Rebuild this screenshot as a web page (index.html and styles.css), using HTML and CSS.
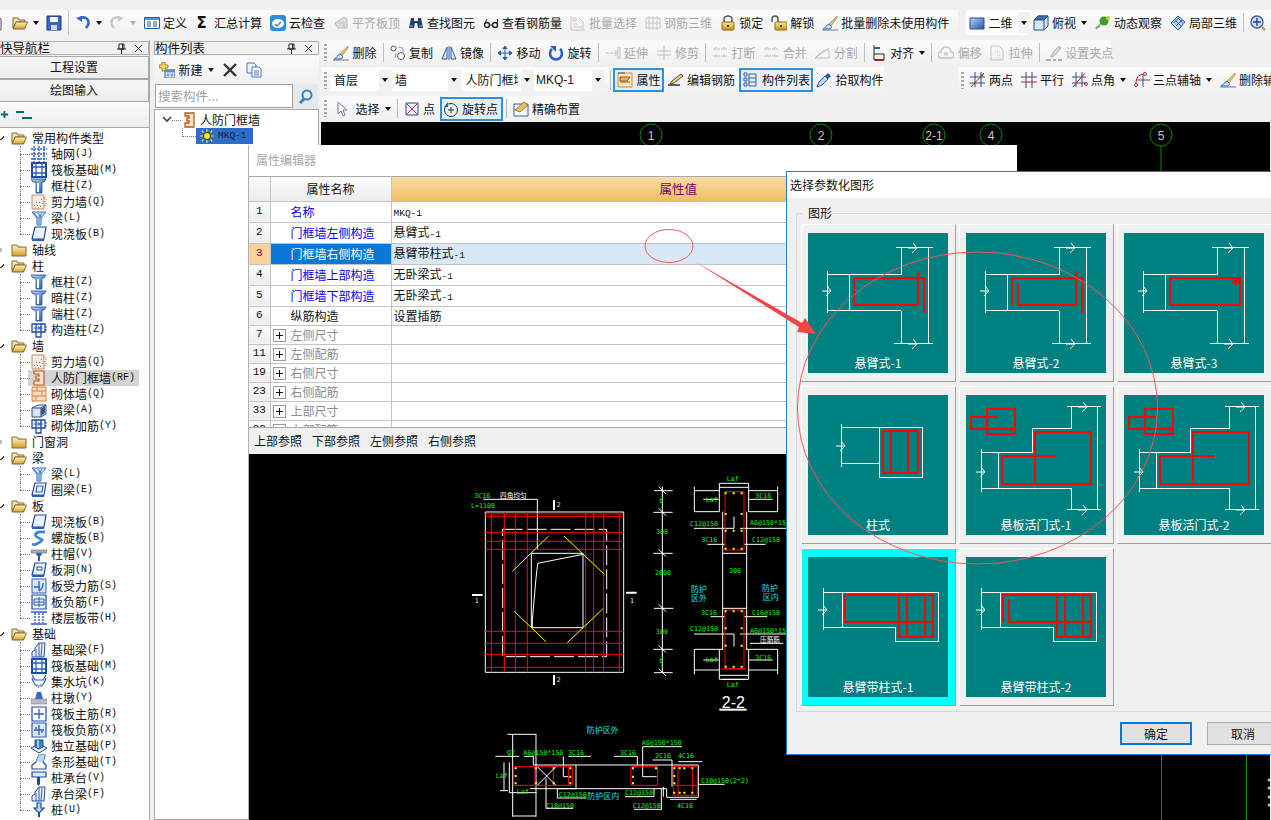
FILE: index.html
```html
<!DOCTYPE html>
<html lang="zh-CN">
<head>
<meta charset="utf-8">
<title>构件属性编辑</title>
<link rel="stylesheet" href="styles.css">
</head>
<body>
<svg class="defs" xmlns="http://www.w3.org/2000/svg">
<defs>
<linearGradient id="gf" x1="0" y1="0" x2="0" y2="1"><stop offset="0" stop-color="#fff6c4"/><stop offset="1" stop-color="#d69e26"/></linearGradient>
<linearGradient id="gb" x1="0" y1="0" x2="1" y2="1"><stop offset="0" stop-color="#bcd6f4"/><stop offset="1" stop-color="#1c52ae"/></linearGradient>
<linearGradient id="gy" x1="0" y1="0" x2="0" y2="1"><stop offset="0" stop-color="#ffe98a"/><stop offset="1" stop-color="#c9921a"/></linearGradient>
<symbol id="doc" viewBox="0 0 16 16"><path d="M3 1h7l3 3v11H3z" fill="#fff" stroke="#555"/></symbol>
<symbol id="fopen" viewBox="0 0 16 16"><path d="M1 3h5l1 2h6v2H4l-3 6z" fill="#f0e3b4" stroke="#85692c"/><path d="M4 7h11.500l-3 7H1z" fill="url(#gf)" stroke="#85692c"/></symbol>
<symbol id="fclosed" viewBox="0 0 16 16"><path d="M1 3h5l1 2h8v9H1z" fill="url(#gf)" stroke="#85692c"/></symbol>
<symbol id="save" viewBox="0 0 16 16"><path d="M1 1h14v14H1z" fill="#3d66c4" stroke="#1b357f"/><path d="M4 2h8v5H4z" fill="#fff"/><path d="M5 10h6v5H5z" fill="#c9d5ec"/></symbol>
<symbol id="undo" viewBox="0 0 16 16"><path d="M5 3C11 1 15 5 13 10l-2 3" fill="none" stroke="#2f68c8" stroke-width="2.600"/><path d="M1 3l6-2v6z" fill="#2f68c8"/></symbol>
<symbol id="redo" viewBox="0 0 16 16"><path d="M11 3C5 1 1 5 3 10l2 3" fill="none" stroke="#c8c8c8" stroke-width="2.600"/><path d="M15 3L9 1v6z" fill="#c8c8c8"/></symbol>
<symbol id="define" viewBox="0 0 16 16"><path d="M.5 2.500h15v11H.5z" fill="#fff" stroke="#2a5ea8"/><path d="M1 3h14v2H1z" fill="#5c8fd0"/><path d="M3 7h4M3 9h4M3 11h4M9 7h4M9 9h4M9 11h4" stroke="#33558a"/></symbol>
<symbol id="cloud" viewBox="0 0 16 16"><rect width="16" height="16" rx="3" fill="#2a8fdc"/><ellipse cx="8" cy="8.500" rx="6" ry="4.500" fill="#fff"/><path d="M5 9l2 2 4-4" fill="none" stroke="#2a8fdc" stroke-width="1.500"/></symbol>
<symbol id="flat" viewBox="0 0 16 16"><path d="M2 8l9-6 3 2v9H5z" fill="#ddd" stroke="#bbb"/><path d="M5 8h6v5" fill="none" stroke="#bbb"/></symbol>
<symbol id="binoc" viewBox="0 0 16 16"><path d="M3 3h3v3h4V3h3l2 10h-5L9 8H7l-1 5H1z" fill="#26406e"/><path d="M2 11h3M11 11h3" stroke="#9dc0ea"/></symbol>
<symbol id="glass" viewBox="0 0 16 16"><circle cx="4" cy="10" r="2.500" fill="none" stroke="#222" stroke-width="1.400"/><circle cx="12" cy="10" r="2.500" fill="none" stroke="#222" stroke-width="1.400"/><path d="M4 4L1.500 9M14.500 4v5M6 10h3" fill="none" stroke="#222"/></symbol>
<symbol id="bsel" viewBox="0 0 16 16"><path d="M1 1v14h14M3 3h3v3H3zM3 9h5M3 12h9M9 3l4 4v7" fill="none" stroke="#c4c4c4"/></symbol>
<symbol id="r3d" viewBox="0 0 16 16"><path d="M1 3h14v10H1zM4 1v14M8 1v14M12 1v14M1 8h14" fill="none" stroke="#c8c8c8"/></symbol>
<symbol id="lock" viewBox="0 0 16 16"><path d="M4 7V4a4 3 0 0 1 8 0v3" fill="none" stroke="#555" stroke-width="1.500"/><rect x="2" y="7" width="12" height="8" rx="1" fill="url(#gy)" stroke="#8a6a1c"/><path d="M8 10v2" stroke="#5a4410" stroke-width="2"/></symbol>
<symbol id="unlock" viewBox="0 0 16 16"><path d="M1 7V4a3 3 0 0 1 6 0v3" fill="none" stroke="#555" stroke-width="1.500"/><rect x="4" y="7" width="12" height="8" rx="1" fill="url(#gy)" stroke="#8a6a1c"/><path d="M10 10v2" stroke="#5a4410" stroke-width="2"/></symbol>
<symbol id="brush" viewBox="0 0 16 16"><path d="M15 1L7 9l2 2 6-8z" fill="#e9c06c" stroke="#a77a26" stroke-width=".600"/><path d="M7 9c-3 1-3 4-6 5h6c3-1 3-2 2-3z" fill="#cfe0f6" stroke="#2f68c8"/><path d="M0 15h16" stroke="#777"/></symbol>
<symbol id="v2d" viewBox="0 0 16 16"><path d="M1 3h14v11H1z" fill="url(#gb)" stroke="#2a4fa0"/></symbol>
<symbol id="cube" viewBox="0 0 16 16"><path d="M1 5l4-4h10v10l-4 4H1z" fill="#d8e8f8" stroke="#264a80"/><path d="M1 5l4-4h10l-4 4z" fill="#3a6fa8" stroke="#264a80"/><path d="M11 5v10M11 5l4-4" stroke="#264a80"/></symbol>
<symbol id="orbit" viewBox="0 0 16 16"><path d="M1 14C3 11 10 4 15 3" fill="none" stroke="#b2b2b2" stroke-width="2"/><circle cx="9" cy="6" r="4.500" fill="#3e9e28"/><circle cx="13" cy="3" r="2" fill="#d8c820"/><path d="M1 13l4-2" stroke="#889" stroke-width="1.500"/></symbol>
<symbol id="local" viewBox="0 0 16 16"><path d="M8 1l7 6-7 8-7-7z" fill="#bcd6f4" stroke="#2a5ea8"/><path d="M4.500 4.500l7 7M8 3l5 5M6 11L12 5M3.500 8l6-6" stroke="#2a5ea8"/></symbol>
<symbol id="zoomi" viewBox="0 0 16 16"><circle cx="7" cy="7" r="6" fill="#cfe0f6" stroke="#3a5a92" stroke-width="1.300"/><path d="M7 3v8M3 7h8" stroke="#1c3f8c" stroke-width="1.400"/><path d="M12 12l3 3" stroke="#c28a2a" stroke-width="2"/></symbol>
<symbol id="copyc" viewBox="0 0 16 16"><circle cx="3.500" cy="3.500" r="2.500" fill="#fff" stroke="#556"/><circle cx="11" cy="11" r="3.500" fill="#fff" stroke="#556"/><path d="M8 2l5 1v4M6 8l-1 5" fill="none" stroke="#8aa4c8"/></symbol>
<symbol id="mirror" viewBox="0 0 16 16"><path d="M6 2v12H1zM10 2v12h5z" fill="#dfeaf8" stroke="#2a5ea8"/><path d="M8 1v14" stroke="#2a5ea8"/></symbol>
<symbol id="move" viewBox="0 0 16 16"><path d="M8 1v14M1 8h14M8 1L6 3.500h4zM8 15l-2-2.500h4zM1 8l2.500-2v4zM15 8l-2.500-2v4z" fill="#2a5ea8" stroke="#2a5ea8"/></symbol>
<symbol id="rotate" viewBox="0 0 16 16"><path d="M4 4a6 6 0 1 0 8 0" fill="none" stroke="#2a5ec8" stroke-width="2.600"/><path d="M2 1h6v6z" fill="#2a5ec8"/></symbol>
<symbol id="extend" viewBox="0 0 16 16"><path d="M0 8h4M5 8h3M9 8h2M13 2v12M15 2v12M11 5v6" stroke="#c0c0c0" fill="none"/></symbol>
<symbol id="trim" viewBox="0 0 16 16"><path d="M1 6h14M1 10h14M8 1v14" stroke="#c0c0c0" fill="none"/></symbol>
<symbol id="break" viewBox="0 0 16 16"><path d="M1 4h14M1 11h14M4 2v4M12 2v4M4 9v4M12 9v4" stroke="#c0c0c0" fill="none" stroke-dasharray="3 1"/></symbol>
<symbol id="split" viewBox="0 0 16 16"><path d="M1 13L10 5h5v8zM1 13l14-10" stroke="#c0c0c0" fill="none"/></symbol>
<symbol id="align" viewBox="0 0 16 16"><path d="M3 0v15h10v-6H3" fill="none" stroke="#222"/><path d="M3 3h6" stroke="#2a5ea8" stroke-width="2"/><path d="M4 15h9" stroke="#a02020" stroke-width="2"/></symbol>
<symbol id="offset" viewBox="0 0 16 16"><path d="M3 13a3 3 0 0 1 0-6 5 5 0 0 1 10 0 3 3 0 0 1 0 6z" fill="none" stroke="#c4c4c4" stroke-width="1.500"/><circle cx="8" cy="9" r="2" fill="#ccc"/></symbol>
<symbol id="stretch" viewBox="0 0 16 16"><path d="M2 1h8l4 4v10H2z" fill="none" stroke="#c4c4c4"/><path d="M6 7h5M8 10h3M9 13h3" stroke="#c4c4c4" stroke-dasharray="1 1"/></symbol>
<symbol id="grip" viewBox="0 0 16 16"><path d="M0 15h5M7 15h3M12 15h4" stroke="#b0b0b0" stroke-width="2"/><path d="M13 1l2 2-7 8-3 1 1-3z" fill="#d8d8d8" stroke="#b0b0b0"/></symbol>
<symbol id="props" viewBox="0 0 16 16"><path d="M1 1h14v14H1z" fill="#f8e8c8" stroke="#d8892a"/><path d="M3 5h10l-3 4H3zM3 10h10" fill="#e8b468" stroke="#8a5a1e"/><path d="M1 1h7" stroke="#2a5ea8"/></symbol>
<symbol id="erebar" viewBox="0 0 16 16"><path d="M0 13h12" stroke="#222" stroke-width="1.400"/><path d="M2 12l2-3 9-7 2 2-9 7z" fill="#f2d47a" stroke="#222" stroke-width=".800"/></symbol>
<symbol id="listi" viewBox="0 0 16 16"><path d="M1 1h3v3H1zM1 6h3v3H1zM1 11h3v3H1zM6 2h7v12H6zM6 6h7M6 10h7" fill="none" stroke="#2a5ea8"/></symbol>
<symbol id="picker" viewBox="0 0 16 16"><path d="M1 15l2-5 6-6 3 3-6 6z" fill="#bcd6f4" stroke="#2a5ea8"/><path d="M9 4l3-3 3 3-3 3z" fill="#2a5ea8"/></symbol>
<symbol id="twop" viewBox="0 0 16 16"><path d="M0 5h15M0 11h15M5 0v15M11 0v15" stroke="#3a4a8a" fill="none"/><path d="M1 15L14 1" stroke="#c02020"/><circle cx="12" cy="3" r="1.500" fill="#3a8a2a"/></symbol>
<symbol id="parallel" viewBox="0 0 16 16"><path d="M0 5h16M5 0v16M11 0v16" stroke="#3a4a8a" fill="none"/><path d="M0 10h16" stroke="#c02020"/></symbol>
<symbol id="pangle" viewBox="0 0 16 16"><path d="M0 5h14M0 11h14M4 0v15M10 0v15" stroke="#3a4a8a" fill="none"/><path d="M1 15L13 1" stroke="#c02020"/><circle cx="14" cy="12" r="1.500" fill="none" stroke="#c02020"/></symbol>
<symbol id="threep" viewBox="0 0 16 16"><path d="M2 15V10a8 8 0 0 1 8-8" fill="none" stroke="#c02020"/><path d="M3 8h13M9 3v12" stroke="#3a4a8a"/><circle cx="11" cy="2" r="1.500" fill="#fff" stroke="#c02020"/><circle cx="2" cy="13" r="1.500" fill="#fff" stroke="#c02020"/></symbol>
<symbol id="cursor" viewBox="0 0 16 16"><path d="M5 1v12l3-3 2 5 2-1-2-5h4z" fill="#fff" stroke="#6a7a9a"/></symbol>
<symbol id="pointi" viewBox="0 0 16 16"><path d="M2 2h12v12H2z" fill="#e8eef8" stroke="#2a4a8a"/><path d="M3 3l10 10M13 3L3 13" stroke="#c02040"/></symbol>
<symbol id="rotp" viewBox="0 0 16 16"><circle cx="8" cy="9" r="6.500" fill="none" stroke="#333"/><path d="M8 6v6M5 9h6" stroke="#333"/><path d="M1 6l4-5v5z" fill="#2a5ea8"/></symbol>
<symbol id="precise" viewBox="0 0 16 16"><path d="M1 3h14v12H1z" fill="#fff" stroke="#2a5ea8"/><path d="M2 9L11 1l4 3-8 7z" fill="#e6c46a" stroke="#9a7a2a"/></symbol>
<symbol id="tplus" viewBox="0 0 10 10"><path d="M1 5h8M5 1v8" stroke="#0a6a6a" stroke-width="2"/></symbol>
<symbol id="tminus" viewBox="0 0 16 10"><path d="M0 2h8M6 8h10" stroke="#0a6a6a" stroke-width="2"/></symbol>
<symbol id="newi" viewBox="0 0 16 16"><path d="M3 0h3v3h3v3H6v3H3V6H0V3h3z" fill="#f2d860" stroke="#a08a20"/><path d="M6 8h10v8H6z" fill="#fff" stroke="#2a5ea8"/><path d="M6 8h10v2H6zM9 11v4M13 11v4M6 13h10" fill="#5c8fd0" stroke="#5c8fd0"/></symbol>
<symbol id="cross" viewBox="0 0 16 16"><path d="M2 2l12 12M14 2L2 14" stroke="#333" stroke-width="2.400"/></symbol>
<symbol id="pcopy" viewBox="0 0 16 16"><path d="M1 1h7l2 2v8H1z" fill="#e8f0fa" stroke="#4a7ac0"/><path d="M6 5h7l2 2v8H6z" fill="#fff" stroke="#4a7ac0"/><path d="M8 9h5M8 11h5M8 13h5" stroke="#4a7ac0"/></symbol>
<symbol id="searchi" viewBox="0 0 16 16"><circle cx="9" cy="6" r="4.500" fill="#e6f2fc" stroke="#2a86d0" stroke-width="2"/><path d="M6 10l-4 4" stroke="#2a86d0" stroke-width="3"/></symbol>
<symbol id="pin" viewBox="0 0 9 11"><path d="M2 1h5v5H2zM0 6h9M4.500 6v5M5.500 1v5" fill="none" stroke="#222"/></symbol>
<symbol id="closex" viewBox="0 0 9 9"><path d="M1 1l7 7M8 1L1 8" stroke="#333"/></symbol>
<symbol id="axisg" viewBox="0 0 16 16"><path d="M3 0v16M8 0v16M13 0v16M0 3h16M0 8h16M0 13h16" stroke="#2a5cc0" stroke-width="1.400" stroke-dasharray="2 1"/></symbol>
<symbol id="raft" viewBox="0 0 16 16"><path d="M1 1h14v14H1z" fill="#fff" stroke="#1c4aa0" stroke-width="2"/><path d="M5 1v14M11 1v14M1 5h14M1 11h14" stroke="#2a5cc0" stroke-width="1.300"/></symbol>
<symbol id="col" viewBox="0 0 16 16"><path d="M0 1h15l-2 3h-2v11H5V4H2z" fill="url(#gb)" stroke="#1c4aa0" stroke-width=".800"/><path d="M7 5v9" stroke="#fff" stroke-width="2"/></symbol>
<symbol id="shear" viewBox="0 0 16 16"><path d="M1 1h12v14H1z" fill="#f3ece4" stroke="#c88a5a"/><path d="M3 12l1-1M6 12l1-1M9 13l1-1M5 9l1-1M8 9l1-1M10 6l1-1M11 10l1-1M4 14h1M7 14h1" stroke="#8a7a6a"/><path d="M14 3v1M14 7v1M14 11v1M15 5v1M15 9v1" stroke="#d8692a"/></symbol>
<symbol id="beam" viewBox="0 0 16 16"><path d="M1 2h14l-5 6v7H6V8z" fill="#e4effb" stroke="#2a6ac0"/><path d="M3 3l4 5M7 3l3 5M11 3l-3 5M8 8v6" stroke="#2a6ac0"/></symbol>
<symbol id="slab" viewBox="0 0 16 16"><path d="M4 1h11l-2 12H1z" fill="#eaf2fb" stroke="#1c4aa0" stroke-width="1.200"/><path d="M1 13h12v2H1z" fill="#2a5cc0"/></symbol>
<symbol id="door" viewBox="0 0 16 16"><path d="M3 1h10v14H3v-4h5V9H5V6h3V4H3z" fill="#f5e4d4" stroke="#b85a1c" stroke-width="1.200"/></symbol>
<symbol id="brick" viewBox="0 0 16 16"><path d="M1 1h14v14H1z" fill="#f8dcc4" stroke="#d8803a"/><path d="M1 5h14M1 10h14M6 1v4M11 5v5M5 10v5" stroke="#d8803a"/></symbol>
<symbol id="darkb" viewBox="0 0 16 16"><path d="M1 6l6-3h8v9l-5 3H1z" fill="#d8e4f2" stroke="#33558a"/><path d="M1 6h9v9M10 6l5-3" fill="none" stroke="#33558a"/><path d="M10 7l4-3v7l-4 3z" fill="#33558a"/></symbol>
<symbol id="mreb" viewBox="0 0 16 16"><path d="M1 2h13v8H1zM5 2v13h5V2" fill="none" stroke="#1c4aa0" stroke-width="1.300"/><path d="M3 6h9M7 4l3 4M10 4l-3 4" stroke="#2a5cc0"/><path d="M14 5h2M14 8h2" stroke="#2a5cc0"/></symbol>
<symbol id="ring" viewBox="0 0 16 16"><path d="M4 1h11l-2 12H1z" fill="#fff" stroke="#1c4aa0" stroke-width="1.200"/><path d="M6 4h6l-1 6H5z" fill="#eaf2fb" stroke="#2a5cc0" stroke-width="1.200"/><path d="M1 13h12v2H1z" fill="#2a5cc0"/></symbol>
<symbol id="spiral" viewBox="0 0 16 16"><path d="M14 2C6 1 2 4 6 7s8 2 3 5-5 3-8 2" fill="none" stroke="#3a86d8" stroke-width="2.800"/></symbol>
<symbol id="cap" viewBox="0 0 16 16"><path d="M0 4h16v3H0z" fill="#a8aeb8" stroke="#666" stroke-width=".600"/><path d="M5 7h6l-1 3H6zM7 10h2v5H7z" fill="#2a5cc0"/></symbol>
<symbol id="hole" viewBox="0 0 16 16"><path d="M4 1h11l-2 12H1z" fill="#eaf2fb" stroke="#1c4aa0" stroke-width="1.200"/><path d="M6 5h5v3H6z" fill="#fff" stroke="#1c4aa0"/><path d="M1 13h12v2H1z" fill="#2a5cc0"/></symbol>
<symbol id="sreb" viewBox="0 0 16 16"><path d="M1 1h14v14H1z" fill="#d8e6f6" stroke="#2a5cc0"/><path d="M8 3v10M3 9h6M12 5c0 4-2 7-4 8" fill="none" stroke="#2a5cc0" stroke-width="1.300"/></symbol>
<symbol id="sneg" viewBox="0 0 16 16"><path d="M1 1h14v14H1z" fill="#eaf2fb" stroke="#1c4aa0" stroke-width="1.200"/><path d="M3 5h10v6H3zM8 3v10M3 8h10" fill="none" stroke="#2a5cc0"/></symbol>
<symbol id="band" viewBox="0 0 16 16"><path d="M0 2h16M0 14h16" stroke="#2a5cc0" stroke-width="1.400"/><path d="M4 3v10M12 3v10M8 3v10" stroke="#2a5cc0" stroke-dasharray="2 1" stroke-width="1.400"/></symbol>
<symbol id="fbeam" viewBox="0 0 16 16"><path d="M4 6l4-5h6l-1 14H1v-5l3-2z" fill="#eaf2fb" stroke="#1c4aa0"/><path d="M8 1v14M11 2l-1 13M5 7v8" stroke="#2a5cc0"/></symbol>
<symbol id="sump" viewBox="0 0 16 16"><path d="M1 1l3 5h8l3-5M1 4c2 6 3 8 7 8s5-2 7-8" fill="none" stroke="#2a5cc0" stroke-width="1.200"/><path d="M4 12l1-1M7 14l1-1M10 13l1-1M6 11h1M9 10h1" stroke="#5a90d8"/></symbol>
<symbol id="pier" viewBox="0 0 16 16"><path d="M6 2h4l2 7H4z" fill="#3a6ac0"/><path d="M0 9h16v5H0z" fill="#b8bcc4" stroke="#777" stroke-width=".600"/></symbol>
<symbol id="rmain" viewBox="0 0 16 16"><path d="M1 1h14v14H1z" fill="#fff" stroke="#1c4aa0" stroke-width="1.200"/><path d="M8 3v10M3 8h10" stroke="#2a5cc0" stroke-width="1.300"/></symbol>
<symbol id="rneg" viewBox="0 0 16 16"><path d="M1 1h14v14H1z" fill="#dce8f6" stroke="#2a5cc0" stroke-width="1.200"/><path d="M8 3v10M3 8h10M5 5v2M11 9v2" stroke="#2a5cc0" stroke-width="1.300"/></symbol>
<symbol id="iso" viewBox="0 0 16 16"><path d="M0 10l8-4 8 4-8 5z" fill="#eaf2fb" stroke="#1c4aa0"/><path d="M4 2h8v7l-4 2-4-2z" fill="#4a80c8" stroke="#1c4aa0"/><path d="M7 2v8" stroke="#fff"/></symbol>
<symbol id="strip" viewBox="0 0 16 16"><path d="M1 15v-4l4-3 3-7h6l-2 7 3 3v4z" fill="#fff" stroke="#1c4aa0" stroke-width="1.200"/><path d="M8 1l6 0-2 7H5z" fill="#bcd6f4"/></symbol>
<symbol id="pcap" viewBox="0 0 16 16"><path d="M1 2h14v5H1z" fill="#dce8f6" stroke="#1c4aa0" stroke-width="1.200"/><path d="M6 7h3v7l-1.500 2L6 14z" fill="#1c4aa0"/></symbol>
<symbol id="pile" viewBox="0 0 16 16"><path d="M6 1h4v5h3l-5 5-5-5h3z" fill="#bcd6f4" stroke="#1c4aa0" stroke-width="1.200"/><path d="M8 11v4" stroke="#1c4aa0" stroke-width="2"/></symbol>
<symbol id="doorl" viewBox="0 0 16 16"><path d="M4 1h9v14H4v-4h4V9H6V6h2V4H4z" fill="#f8e4d0" stroke="#b85a1c" stroke-width="1.300"/></symbol>
<symbol id="sun" viewBox="0 0 16 16"><circle cx="8" cy="8" r="4" fill="#f6e818" stroke="#3a3a00"/><path d="M8 0v3M8 13v3M0 8h3M13 8h3M2 2l2 2M12 12l2 2M14 2l-2 2M2 14l2-2" stroke="#f6e818" stroke-width="1.400"/></symbol>
<g id="brk"><path d="M-5 1H4L-1 6M4 1L0-4" fill="none" stroke="#fff"/></g>
<symbol id="tbase" viewBox="0 0 140 120" overflow="visible"><path class="wl" d="M19.500 38v42M19 41.500h74M93.500 41.500V14.500M88 14.500h37M120.500 14v96.500M86 110.500h39M93.500 110.500V77.500M19 77.500h74M41.500 41v36"/><use href="#brk" x="19" y="57"/><use href="#brk" x="105" y="14"/><use href="#brk" x="105" y="110"/></symbol>
<symbol id="tdoor" viewBox="0 0 140 120" overflow="visible"><path class="wl" d="M15.500 54v43M15 57.500h51.500V33.500H105.500V11.500M101 11.500h34M131.500 11v103M101 114.500h34M105.500 114V93.500H15M32.500 57v36"/><use href="#brk" x="15" y="76"/><use href="#brk" x="117" y="11"/><use href="#brk" x="117" y="114"/></symbol>
<symbol id="tband" viewBox="0 0 140 120" overflow="visible"><path class="wl" d="M15.500 31v42M15 35.500h115.500V84.500H87.500V70.500H15M34.500 35v35"/><use href="#brk" x="15" y="52"/></symbol>
</defs>
</svg>

<div class="app">
<header class="toprow">
  <div class="tb tb-top">
    <span class="it lead"><svg class="ic"><use href="#doc"/></svg></span>
    <span class="it"><svg class="ic"><use href="#fopen"/></svg></span><i class="caret"></i>
    <span class="it"><svg class="ic"><use href="#save"/></svg></span><i class="sp tall"></i>
    <span class="it"><svg class="ic"><use href="#undo"/></svg></span><i class="caret"></i>
    <span class="it"><svg class="ic"><use href="#redo"/></svg></span><i class="caret off"></i>
    <span class="it"><svg class="ic"><use href="#define"/></svg>定义</span>
    <span class="it"><span class="sigma">Σ</span>汇总计算</span>
    <span class="it"><svg class="ic"><use href="#cloud"/></svg>云检查</span>
    <span class="it off"><svg class="ic"><use href="#flat"/></svg>平齐板顶</span>
    <span class="it"><svg class="ic"><use href="#binoc"/></svg>查找图元</span>
    <span class="it"><svg class="ic"><use href="#glass"/></svg>查看钢筋量</span>
    <span class="it off"><svg class="ic"><use href="#bsel"/></svg>批量选择</span>
    <span class="it off"><svg class="ic"><use href="#r3d"/></svg>钢筋三维</span>
    <span class="it"><svg class="ic"><use href="#lock"/></svg>锁定</span>
    <span class="it"><svg class="ic"><use href="#unlock"/></svg>解锁</span>
    <span class="it"><svg class="ic"><use href="#brush"/></svg>批量删除未使用构件</span>
  </div>
  <div class="tb tb-view">
    <span class="viewbox"><span class="it"><svg class="ic"><use href="#v2d"/></svg>二维</span><span class="dd"><i class="caret"></i></span></span>
    <span class="it"><svg class="ic"><use href="#cube"/></svg>俯视</span><i class="caret"></i>
    <span class="it"><svg class="ic"><use href="#orbit"/></svg>动态观察</span>
    <span class="it"><svg class="ic"><use href="#local"/></svg>局部三维</span><i class="sp"></i>
    <span class="it"><svg class="ic"><use href="#zoomi"/></svg></span>
  </div>
</header>

<div class="work">
  <aside class="nav">
    <div class="dock"><span>快导航栏</span><svg class="pin"><use href="#pin"/></svg><svg class="xx"><use href="#closex"/></svg></div>
    <div class="navbtn first">工程设置</div>
    <div class="navbtn">绘图输入</div>
    <div class="navtools"><svg class="tp"><use href="#tplus"/></svg><svg class="tm"><use href="#tminus"/></svg></div>
    <div class="navtree">
      <div class="grp"><i class="tw open"></i><svg class="ic"><use href="#fopen"/></svg>常用构件类型</div>
      <ul class="leaves">
        <li><span class="cell"><svg class="ic"><use href="#axisg"/></svg>轴网<span class="key">(J)</span></span></li>
        <li><span class="cell"><svg class="ic"><use href="#raft"/></svg>筏板基础<span class="key">(M)</span></span></li>
        <li><span class="cell"><svg class="ic"><use href="#col"/></svg>框柱<span class="key">(Z)</span></span></li>
        <li><span class="cell"><svg class="ic"><use href="#shear"/></svg>剪力墙<span class="key">(Q)</span></span></li>
        <li><span class="cell"><svg class="ic"><use href="#beam"/></svg>梁<span class="key">(L)</span></span></li>
        <li><span class="cell"><svg class="ic"><use href="#slab"/></svg>现浇板<span class="key">(B)</span></span></li>
      </ul>
      <div class="grp"><i class="tw"></i><svg class="ic"><use href="#fclosed"/></svg>轴线</div>
      <div class="grp"><i class="tw open"></i><svg class="ic"><use href="#fopen"/></svg>柱</div>
      <ul class="leaves">
        <li><span class="cell"><svg class="ic"><use href="#col"/></svg>框柱<span class="key">(Z)</span></span></li>
        <li><span class="cell"><svg class="ic"><use href="#col"/></svg>暗柱<span class="key">(Z)</span></span></li>
        <li><span class="cell"><svg class="ic"><use href="#col"/></svg>端柱<span class="key">(Z)</span></span></li>
        <li><span class="cell"><svg class="ic"><use href="#mreb"/></svg>构造柱<span class="key">(Z)</span></span></li>
      </ul>
      <div class="grp"><i class="tw open"></i><svg class="ic"><use href="#fopen"/></svg>墙</div>
      <ul class="leaves">
        <li><span class="cell"><svg class="ic"><use href="#shear"/></svg>剪力墙<span class="key">(Q)</span></span></li>
        <li><span class="cell cur"><svg class="ic"><use href="#door"/></svg>人防门框墙<span class="key">(RF)</span></span></li>
        <li><span class="cell"><svg class="ic"><use href="#brick"/></svg>砌体墙<span class="key">(Q)</span></span></li>
        <li><span class="cell"><svg class="ic"><use href="#darkb"/></svg>暗梁<span class="key">(A)</span></span></li>
        <li><span class="cell"><svg class="ic"><use href="#mreb"/></svg>砌体加筋<span class="key">(Y)</span></span></li>
      </ul>
      <div class="grp"><i class="tw"></i><svg class="ic"><use href="#fclosed"/></svg>门窗洞</div>
      <div class="grp"><i class="tw open"></i><svg class="ic"><use href="#fopen"/></svg>梁</div>
      <ul class="leaves">
        <li><span class="cell"><svg class="ic"><use href="#beam"/></svg>梁<span class="key">(L)</span></span></li>
        <li><span class="cell"><svg class="ic"><use href="#ring"/></svg>圈梁<span class="key">(E)</span></span></li>
      </ul>
      <div class="grp"><i class="tw open"></i><svg class="ic"><use href="#fopen"/></svg>板</div>
      <ul class="leaves">
        <li><span class="cell"><svg class="ic"><use href="#slab"/></svg>现浇板<span class="key">(B)</span></span></li>
        <li><span class="cell"><svg class="ic"><use href="#spiral"/></svg>螺旋板<span class="key">(B)</span></span></li>
        <li><span class="cell"><svg class="ic"><use href="#cap"/></svg>柱帽<span class="key">(V)</span></span></li>
        <li><span class="cell"><svg class="ic"><use href="#hole"/></svg>板洞<span class="key">(N)</span></span></li>
        <li><span class="cell"><svg class="ic"><use href="#sreb"/></svg>板受力筋<span class="key">(S)</span></span></li>
        <li><span class="cell"><svg class="ic"><use href="#sneg"/></svg>板负筋<span class="key">(F)</span></span></li>
        <li><span class="cell"><svg class="ic"><use href="#band"/></svg>楼层板带<span class="key">(H)</span></span></li>
      </ul>
      <div class="grp"><i class="tw open"></i><svg class="ic"><use href="#fopen"/></svg>基础</div>
      <ul class="leaves">
        <li><span class="cell"><svg class="ic"><use href="#fbeam"/></svg>基础梁<span class="key">(F)</span></span></li>
        <li><span class="cell"><svg class="ic"><use href="#raft"/></svg>筏板基础<span class="key">(M)</span></span></li>
        <li><span class="cell"><svg class="ic"><use href="#sump"/></svg>集水坑<span class="key">(K)</span></span></li>
        <li><span class="cell"><svg class="ic"><use href="#pier"/></svg>柱墩<span class="key">(Y)</span></span></li>
        <li><span class="cell"><svg class="ic"><use href="#rmain"/></svg>筏板主筋<span class="key">(R)</span></span></li>
        <li><span class="cell"><svg class="ic"><use href="#rneg"/></svg>筏板负筋<span class="key">(X)</span></span></li>
        <li><span class="cell"><svg class="ic"><use href="#iso"/></svg>独立基础<span class="key">(P)</span></span></li>
        <li><span class="cell"><svg class="ic"><use href="#strip"/></svg>条形基础<span class="key">(T)</span></span></li>
        <li><span class="cell"><svg class="ic"><use href="#pcap"/></svg>桩承台<span class="key">(V)</span></span></li>
        <li><span class="cell"><svg class="ic"><use href="#fbeam"/></svg>承台梁<span class="key">(F)</span></span></li>
        <li><span class="cell"><svg class="ic"><use href="#pile"/></svg>桩<span class="key">(U)</span></span></li>
      </ul>
    </div>
  </aside>

  <aside class="clist">
    <div class="dock"><span>构件列表</span><svg class="pin"><use href="#pin"/></svg><svg class="xx"><use href="#closex"/></svg></div>
    <div class="ctools">
      <span class="it"><svg class="ic"><use href="#newi"/></svg>新建</span><i class="caret"></i>
      <svg class="ic"><use href="#cross"/></svg>
      <svg class="ic"><use href="#pcopy"/></svg>
    </div>
    <div class="csearch"><span class="input">搜索构件...</span><span class="sbtn"><svg class="ic"><use href="#searchi"/></svg></span></div>
    <div class="ctree">
      <div class="croot"><svg class="chev" viewBox="0 0 10 8"><path d="M1 1l4 4 4-4" fill="none" stroke="#444" stroke-width="1.600"/></svg><i class="dots"></i><svg class="ic"><use href="#doorl"/></svg>人防门框墙</div>
      <div class="cchild"><i class="elbow"></i><span class="csel"><svg class="ic"><use href="#sun"/></svg><span class="key">MKQ-1</span></span></div>
    </div>
  </aside>

  <main class="stage">
    <div class="tb r2">
      <i class="grp-h"></i>
      <span class="it"><svg class="ic"><use href="#brush"/></svg>删除</span><i class="sp"></i>
      <span class="it"><svg class="ic"><use href="#copyc"/></svg>复制</span>
      <span class="it"><svg class="ic"><use href="#mirror"/></svg>镜像</span><i class="sp"></i>
      <span class="it"><svg class="ic"><use href="#move"/></svg>移动</span>
      <span class="it"><svg class="ic"><use href="#rotate"/></svg>旋转</span><i class="sp"></i>
      <span class="it off"><svg class="ic"><use href="#extend"/></svg>延伸</span>
      <span class="it off"><svg class="ic"><use href="#trim"/></svg>修剪</span><i class="sp"></i>
      <span class="it off"><svg class="ic"><use href="#break"/></svg>打断</span>
      <span class="it off"><svg class="ic"><use href="#break"/></svg>合并</span>
      <span class="it off"><svg class="ic"><use href="#split"/></svg>分割</span><i class="sp"></i>
      <span class="it"><svg class="ic"><use href="#align"/></svg>对齐</span><i class="caret"></i><i class="sp"></i>
      <span class="it off"><svg class="ic"><use href="#offset"/></svg>偏移</span>
      <span class="it off"><svg class="ic"><use href="#stretch"/></svg>拉伸</span><i class="sp"></i>
      <span class="it off"><svg class="ic"><use href="#grip"/></svg>设置夹点</span>
    </div>
    <div class="r3">
      <div class="tb r3a">
        <i class="grp-h"></i>
        <span class="combo c1"><b>首层</b><span class="dd"><i class="caret"></i></span></span>
        <span class="combo c2"><b>墙</b><span class="dd"><i class="caret"></i></span></span>
        <span class="combo c3"><b>人防门框墙</b><span class="dd"><i class="caret"></i></span></span>
        <span class="combo c4"><b class="latin">MKQ-1</b><span class="dd"><i class="caret"></i></span></span>
        <i class="sp"></i>
        <span class="it act a1"><svg class="ic"><use href="#props"/></svg>属性</span>
        <span class="it"><svg class="ic"><use href="#erebar"/></svg>编辑钢筋</span>
        <span class="it act a2"><svg class="ic"><use href="#listi"/></svg>构件列表</span>
        <span class="it"><svg class="ic"><use href="#picker"/></svg>拾取构件</span>
      </div>
      <div class="tb r3b">
        <i class="grp-h"></i>
        <span class="it"><svg class="ic"><use href="#twop"/></svg>两点</span>
        <span class="it"><svg class="ic"><use href="#parallel"/></svg>平行</span>
        <span class="it"><svg class="ic"><use href="#pangle"/></svg>点角</span><i class="caret"></i>
        <span class="it"><svg class="ic"><use href="#threep"/></svg>三点辅轴</span><i class="caret"></i>
        <span class="it"><svg class="ic"><use href="#brush"/></svg>删除辅轴</span>
      </div>
    </div>
    <div class="tb r4">
      <i class="grp-h"></i>
      <span class="it sel"><svg class="ic"><use href="#cursor"/></svg>选择</span><i class="caret"></i><i class="sp"></i>
      <span class="it"><svg class="ic"><use href="#pointi"/></svg>点</span>
      <span class="it act a3"><svg class="ic"><use href="#rotp"/></svg>旋转点</span><i class="sp"></i>
      <span class="it"><svg class="ic"><use href="#precise"/></svg>精确布置</span>
    </div>
    <svg class="canvas" viewBox="322 122 949 698">
      <g class="axis">
        <circle cx="652" cy="135" r="11"/><circle cx="822" cy="135" r="11"/><circle cx="935" cy="135" r="11"/><circle cx="992" cy="135" r="11"/><circle cx="1162" cy="135" r="11"/>
        <path d="M652 146v10M822 146v10M935 146v10M992 146v10M1162 146v30"/>
      </g>
      <g class="axnum">
        <text x="652" y="140">1</text><text x="822" y="140">2</text><text x="935" y="140">2-1</text><text x="992" y="140">4</text><text x="1162" y="140">5</text>
      </g>
      <path class="gl1" d="M1016.500 754v66"/><path class="gl2" d="M1162.500 754v66"/><path class="gl3" d="M1247.500 754v66"/>
      <g class="dotsg"><circle cx="1270" cy="780" r="1.500"/><circle cx="1270" cy="788" r="1.500"/><circle cx="1270" cy="797" r="1.500"/><circle cx="1270" cy="805" r="1.500"/></g>
    </svg>
  </main>
</div>

<section class="prop">
  <div class="ptitle">属性编辑器</div>
  <div class="pgrid">
    <table>
      <thead><tr><th class="n"></th><th class="nm">属性名称</th><th class="vl">属性值</th></tr></thead>
      <tbody>
        <tr><td class="n">1</td><td class="nm link">名称</td><td class="val"><span class="latin">MKQ-1</span></td></tr>
        <tr><td class="n">2</td><td class="nm link">门框墙左侧构造</td><td class="val">悬臂式<span class="latin">-1</span></td></tr>
        <tr class="on"><td class="n">3</td><td class="nm">门框墙右侧构造</td><td class="val">悬臂带柱式<span class="latin">-1</span></td></tr>
        <tr><td class="n">4</td><td class="nm link">门框墙上部构造</td><td class="val">无卧梁式<span class="latin">-1</span></td></tr>
        <tr><td class="n">5</td><td class="nm link">门框墙下部构造</td><td class="val">无卧梁式<span class="latin">-1</span></td></tr>
        <tr><td class="n">6</td><td class="nm">纵筋构造</td><td class="val">设置插筋</td></tr>
        <tr><td class="n">7</td><td class="nm fold"><i class="plus"></i>左侧尺寸</td><td></td></tr>
        <tr><td class="n">11</td><td class="nm fold"><i class="plus"></i>左侧配筋</td><td></td></tr>
        <tr><td class="n">19</td><td class="nm fold"><i class="plus"></i>右侧尺寸</td><td></td></tr>
        <tr><td class="n">23</td><td class="nm fold"><i class="plus"></i>右侧配筋</td><td></td></tr>
        <tr><td class="n">33</td><td class="nm fold"><i class="plus"></i>上部尺寸</td><td></td></tr>
        <tr><td class="n">38</td><td class="nm fold"><i class="plus"></i>上部配筋</td><td></td></tr>
      </tbody>
    </table>
  </div>
  <div class="pfoot"><span>上部参照</span><span>下部参照</span><span>左侧参照</span><span>右侧参照</span></div>
  <svg class="cad" viewBox="249 454 768 366">
    <g transform="translate(450 450) scale(.33333)">
      <g class="w">
        <path d="M106 186H521V667H106Z"/>
        <path class="dash" d="M158 238H470V620H158Z"/>
        <path d="M244 310H399V533H244ZM399 313L263 340 258 385 247 510V533"/>
        <path d="M100 148H262V300"/>
        <path class="thick" d="M312 150v30M312 675v30M66 435h32M528 428h32"/>
        <path d="M637 110V668M612 122h56M610 187h58M610 310h58M612 475h58M610 598h58M612 668h56M626 110l22 22M626 175l22 22M626 298l22 22M626 463l22 22M626 586l22 22M626 656l22 22"/>
        <path d="M818 185V600M890 185V600M818 310h72M818 475h72M808 100V185H733V110M808 100h88V185h87V110M733 122h75M896 122h87M808 112h88"/>
        <path d="M733 598v75M983 598v75M733 598h85M890 598h93M808 598v90h88V598M733 660h75M896 660h87M808 676h88M816 688h72"/>
        <path d="M732 235h120V200M870 235h138M772 283h53M882 283h65M782 500h42M882 500h70M732 552h120V590M870 552h138M760 148h46M896 148h72M760 630h46M896 630h72M900 580h100"/>
        <path d="M172 853h88M188 855V1100M258 855V1100M136 919h72M178 937V1028H260M162 937V1022M150 1022h24M222 919h28V945H745V1042H650V1016H240M340 919V980H355M355 919h68M378 945V1016H322V1044H410M492 919h70V945M578 890V980H620M578 890h118M608 930h58V1010M640 1010V1040M612 1016V1040H525M634 1016V1078H552M288 985V1075H370M660 1048h80M685 935h72M744 1003h80M188 1098h70"/>
      </g>
      <g class="r">
        <path d="M106 192H521M106 200H521M106 247H521M106 274H521M106 298H521M106 544H521M106 580H521M106 613H521M106 652H521"/>
        <path d="M124 186V667M163 186V667M196 186V667M232 186V667M407 186V667M431 186V667M461 186V667M508 186V667"/>
        <path d="M825 125H882V300H825ZM825 480H882V655H825ZM814 657H888"/>
        <path d="M190 950H368V1006H190ZM255 950V1006M310 950V1006M356 950V1006M543 950H623V1006H543ZM670 950H742V1036H670ZM670 1006H742M684 950V1036M728 950V1036"/>
      </g>
      <g class="y">
        <path d="M187 364L296 258M342 258L463 373M193 484L288 575M352 578L460 475"/>
        <path class="pt" d="M824 130h6M848 130h6M872 130h6M824 192h6M872 192h6M824 242h6M848 242h6M872 242h6M824 296h6M848 296h6M872 296h6M824 484h6M848 484h6M872 484h6M824 535h6M872 535h6M824 587h6M872 587h6M824 650h6M848 650h6M872 650h6"/>
        <path class="pt" d="M194 955h6M194 978h6M194 1000h6M255 955h6M255 1000h6M308 955h6M308 1000h6M358 955h6M358 980h6M358 1000h6M546 955h6M546 980h6M546 1000h6M615 955h6M670 955h6M670 978h6M670 1000h6M670 1028h6M686 955h6M700 955h6M724 955h6M686 1028h6M700 1028h6M724 1028h6"/>
      </g>
      <path class="wx" d="M262 950L318 1006M318 950L262 1006"/>
      <g class="gt">
        <text x="97" y="143">3C16</text><text x="99" y="173">L=1100</text>
        <text x="634" y="158">b</text><text x="636" y="251">300</text><text x="639" y="374">2000</text><text x="636" y="551">300</text><text x="634" y="640">b</text>
        <text x="848" y="92">Laf</text><text x="785" y="155">Laf</text><text x="940" y="143">3C16</text><text x="762" y="227">C12@150</text><text x="960" y="225">A6@150*150</text><text x="778" y="275">3C16</text><text x="948" y="275">C12@150</text><text x="855" y="368">300</text>
        <text x="777" y="494">3C16</text><text x="948" y="494">C16@150</text><text x="762" y="543">C12@150</text><text x="960" y="548">A6@150*150</text><text x="785" y="635">Laf</text><text x="940" y="629">3C16</text><text x="848" y="710">Laf</text>
        <text x="183" y="914">QT</text><text x="280" y="914">A6@150*150</text><text x="378" y="914">3C16</text><text x="534" y="914">3C16</text><text x="635" y="884">A6@150*150</text><text x="639" y="925">2C16</text><text x="708" y="925">4C16</text><text x="825" y="998">C10@150(2*2)</text><text x="155" y="985">Laf</text><text x="218" y="1032">Laf</text><text x="368" y="1040">C12@150</text><text x="567" y="1034">C12@150</text><text x="590" y="1073">C12@150</text><text x="330" y="1073">C18@150</text><text x="705" y="1075">4C16</text>
      </g>
      <text class="wt l" x="150" y="143">四角均匀</text><text class="wt l" x="960" y="576">压筋筋</text>
      <g class="wt num"><text x="326" y="172">2</text><text x="326" y="697">2</text><text x="80" y="458">1</text><text x="546" y="458">1</text></g>
      <g class="ct">
        <text x="747" y="425">防护</text><text x="747" y="453">区外</text><text x="960" y="423">防护</text><text x="962" y="451">区内</text><text x="458" y="849">防护区外</text><text x="460" y="1047">防护区内</text>
      </g>
      <text class="big" x="850" y="775">2-2</text>
      <path class="ul" d="M808 779h82"/>
    </g>
  </svg>
</section>

<section class="dlg">
  <div class="dtitle">选择参数化图形</div>
  <fieldset class="dgroup">
    <legend>图形</legend>
    <div class="thumbs">
      <figure class="thumb"><div class="pic"><svg viewBox="0 0 140 120"><use href="#tbase"/><path class="rd" d="M46 45H116M46 45V72H110M110 38V72M116 45V80"/></svg><figcaption>悬臂式-1</figcaption></div></figure>
      <figure class="thumb"><div class="pic"><svg viewBox="0 0 140 120"><use href="#tbase"/><path class="rd" d="M46 72V45H116M52 50V72H110M110 38V72M116 45V80"/></svg><figcaption>悬臂式-2</figcaption></div></figure>
      <figure class="thumb"><div class="pic"><svg viewBox="0 0 140 120"><use href="#tbase"/><path class="rd" d="M46 45H116V72H46ZM108 50L116 45M111 52L116 47"/></svg><figcaption>悬臂式-3</figcaption></div></figure>
      <figure class="thumb"><div class="pic"><svg viewBox="0 0 140 120"><path class="wl" d="M33.500 29V72M33 32.500H114.500V82.500H71.500V32M33 68.500H71"/><use href="#brk" x="33" y="50"/><path class="rd" d="M75 36H110V78H75ZM83 36V78M100 36V78"/></svg><figcaption>柱式</figcaption></div></figure>
      <figure class="thumb"><div class="pic"><svg viewBox="0 0 140 120"><use href="#tdoor"/><path class="rd" d="M21 14H49V39H21ZM32 22H5V34H46M46 36V32"/><path class="rd" d="M69 37H125V89H36V61H90M69 37V89"/></svg><figcaption>悬板活门式-1</figcaption></div></figure>
      <figure class="thumb"><div class="pic"><svg viewBox="0 0 140 120"><use href="#tdoor"/><path class="rd" d="M21 14H49V39H21ZM32 22H5V34H46M46 36V32"/><path class="rd" d="M69 37H125V89H36V61H90M69 37V89"/></svg><figcaption>悬板活门式-2</figcaption></div></figure>
      <figure class="thumb chosen"><div class="pic"><svg viewBox="0 0 140 120"><use href="#tband"/><path class="rd" d="M37 38H125V80H91V38M37 38V65H125M99 38V80M117 38V80"/></svg><figcaption>悬臂带柱式-1</figcaption></div></figure>
      <figure class="thumb"><div class="pic"><svg viewBox="0 0 140 120"><use href="#tband"/><path class="rd" d="M37 65V38H125V80H91V38M43 42V65H125M99 38V80M117 38V80"/></svg><figcaption>悬臂带柱式-2</figcaption></div></figure>
    </div>
  </fieldset>
  <div class="dbtns"><span class="btn ok">确定</span><span class="btn">取消</span></div>
</section>

<svg class="notes" viewBox="0 0 1271 820">
  <ellipse cx="669" cy="246" rx="24" ry="16.500"/>
  <ellipse cx="977.500" cy="408" rx="180" ry="156"/>
  <polygon points="694,261 802,323 805,318 816,334 797,332 799,327"/>
</svg>
</div>
</body>
</html>
```

FILE: styles.css
```css
* { box-sizing: border-box; }
html, body { margin: 0; padding: 0; background: #f0f0f0; }
body { width: 1271px; height: 820px; overflow: hidden; }
.defs { display: block; width: 0; height: 0; }
.app {
  position: relative; width: 1271px; height: 820px; overflow: hidden;
  background: #f0f0f0; color: #111;
  font: 12px/16px "Noto Sans CJK SC", "Noto Sans", sans-serif;
  white-space: nowrap;
}
i { font-style: normal; }
.ic { width: 16px; height: 16px; flex: none; display: block; }
.key, .latin { font-family: "Liberation Mono", monospace; }
.key { font-size: 10px; }
.latin { font-size: 9.5px; }

/* toolbars */
.toprow { height: 40px; padding-top: 10px; display: flex; }
.tb {
  display: flex; align-items: center; gap: 7.5px; height: 25px;
  background: linear-gradient(#fbfbfb, #f0f0f0);
}
.tb-top { width: 958px; }
.tb-view { margin-left: 8px; flex: 1; }
.lead { margin-left: -12px; }
.it { display: flex; align-items: center; gap: 3.5px; flex: none; }
.off { color: #a9a9a9; }
.caret { flex: none; width: 0; height: 0; border: 3.5px solid transparent; border-top: 4px solid #111; border-bottom: 0; margin-left: -2.5px; }
.caret.off { border-top-color: #aaa; }
.sp { flex: none; width: 1px; height: 19px; background: #bdbdbd; margin: 0 -1.5px; }
.sp.tall { height: 25px; background: #c6c6c6; margin-left: -2px; }
.sigma { width: 16px; font: bold 15px/16px "DejaVu Sans", sans-serif; padding-left: 2px; }
.viewbox { display: flex; align-items: center; gap: 5px; height: 25px; padding-left: 3px; background: #fff; width: 62px; margin-right: -3px; }
.dd { display: flex; align-items: center; justify-content: center; width: 12px; height: 21px; background: #f1f1f1; margin-left: auto; flex: none; }
.dd .caret { margin: 0; }
.grp-h { flex: none; width: 3px; height: 17px; margin: 0 -1.500px 0 3px; background: repeating-linear-gradient(#a8a8a8 0 2px, transparent 2px 4px); }

.work { display: flex; height: 780px; }

/* dock panels */
.nav { width: 150px; flex: none; display: flex; flex-direction: column; padding-top: 1px; border-right: 1px solid #a8a8a8; }
.dock { display: flex; align-items: center; height: 14px; border: 1px solid #b0b0b0; border-left-width: 1px; padding-right: 5px; flex: none; font-size: 12.5px; line-height: 12px; }
.nav .dock { border-left: 0; }
.pin { width: 9px; height: 11px; margin-left: auto; flex: none; }
.xx { width: 9px; height: 9px; margin-left: 8px; flex: none; }
.navbtn { flex: none; height: 23px; margin-top: 0; border: 1px solid #a8a8a8; border-left: 0; text-align: center; line-height: 20px; background: linear-gradient(#f6f6f6, #ededed); font-size: 12px; }
.navbtn.first { margin-top: 1px; }
.navtools { flex: none; height: 25px; display: flex; align-items: center; gap: 7px; background: linear-gradient(#fbfbfb, #ededed); }
.tp { width: 9px; height: 9px; flex: none; }
.tm { width: 16px; height: 10px; flex: none; }
.navtree { flex: 1; background: #fff; border-top: 1px solid #a8a8a8; padding-top: 2px; overflow: hidden; }
.grp { height: 16px; display: flex; align-items: center; }
.grp .ic { margin-right: 5px; }
.tw { flex: none; width: 11px; height: 16px; }
.tw.open { background: linear-gradient(135deg, transparent 50%, #444 50%, #444 65%, transparent 65%) 0 6px / 4px 4px no-repeat; }
.tw:not(.open) { background: linear-gradient(90deg, #bbb 50%, transparent 50%) 0 6px / 4px 4px no-repeat; }
.leaves { list-style: none; margin: 0; padding: 0; }
.leaves li { position: relative; height: 16px; padding-left: 30px; display: flex; align-items: center; }
.leaves li::before { content: ""; position: absolute; left: 20px; top: 8px; width: 10px; border-top: 1px dotted #777; }
.leaves li::after { content: ""; position: absolute; left: 20px; top: 0; height: 16px; border-left: 1px dotted #777; }
.leaves li:last-child::after { height: 8px; }
.cell { display: flex; align-items: center; height: 16px; padding: 0 4px 0 1px; }
.cell .ic { margin-right: 4px; }
.cell.cur { background: #d4d4d4; margin-left: -2px; padding-left: 3px; width: 111px; }

.clist { width: 165px; flex: none; margin-left: 4px; display: flex; flex-direction: column; padding-top: 1px; }
.ctools { flex: none; height: 28px; margin-top: 1px; display: flex; align-items: center; gap: 8px; padding-left: 5px; background: linear-gradient(#fbfbfb, #f0f0f0); }
.ctools .caret { margin-left: -3px; }
.csearch { flex: none; height: 25px; display: flex; background: #f0f0f0; }
.input { width: 138px; height: 24px; margin-left: 1px; background: #fff; border: 1px solid #a0a0a0; color: #a0a0a0; padding: 3px 2px; font-size: 12.500px; }
.sbtn { flex: 1; display: flex; align-items: center; justify-content: center; background: #e8e8e8; margin-right: 1px; }
.ctree { flex: 1; background: #fff; border: 1px solid #a8a8a8; padding: 2px 0 0 7px; }
.croot { height: 16px; display: flex; align-items: center; }
.chev { width: 10px; height: 8px; flex: none; }
.dots { width: 9px; border-top: 1px dotted #777; flex: none; }
.croot .ic { margin-right: 3px; }
.cchild { height: 16px; display: flex; padding-left: 20px; }
.elbow { width: 14px; height: 9px; border-left: 1px dotted #777; border-bottom: 1px dotted #777; flex: none; }
.csel { display: flex; align-items: center; gap: 4px; width: 57px; height: 16px; padding-left: 4px; background: #2f6cc6; color: #102040; }
.csel .ic { width: 14px; height: 14px; }
.csel .key { font-size: 9.500px; }

.stage { flex: 1; min-width: 0; margin-left: 2px; display: flex; flex-direction: column; }
.r2 { width: 790px; flex: none; }
.r3 { display: flex; height: 26px; margin-top: 2px; flex: none; }
.r3a { width: 566px; height: 26px; }
.r3b { margin-left: 74px; flex: 1; height: 26px; }
.r4 { width: 260px; margin-top: 3px; flex: none; }
.combo { display: flex; align-items: center; height: 22px; background: #fff; flex: none; margin-left: -6px; overflow: hidden; }
.combo b { font-weight: normal; display: block; overflow: hidden; }
.combo.c1 { width: 60px; margin-left: -2px; padding-left: 3px; }
.combo.c1 b { flex: 1; }
.combo.c2 { width: 68px; padding-left: 3px; margin-left: -6.500px; }
.combo.c2 b { flex: 1; }
.combo.c3 { width: 71px; padding-left: 4px; }
.combo.c3 b { width: 52px; flex: none; }
.combo.c4 { width: 70px; padding-left: 2px; }
.combo.c4 b { flex: 1; font: 12px "Liberation Sans", sans-serif; }
.act { height: 24px; border: 2px solid #2e8fdc; background: #e6eef6; padding: 0 2px; margin: 0 -4px; }
.a1 { width: 51px; }
.a2 { width: 74px; }
.a3 { width: 63px; padding: 0 1px; margin: 0 -3px -1px; }
.sel .ic { margin-right: 3px; }

.canvas { flex: 1; display: block; width: 949px; min-height: 0; margin-top: 1px; background: #000; }
.axis circle { fill: none; stroke: #0a8a0a; }
.axis path { fill: none; stroke: #0a8a0a; }
.axnum text { fill: #c8c8c8; font: 12px "Liberation Sans", sans-serif; text-anchor: middle; }
.gl1 { stroke: #b0b0b0; }
.gl2 { stroke: #d02020; }
.gl3 { stroke: #0a8a0a; }
.dotsg circle { fill: #bbb; }

/* property window */
.prop { position: absolute; left: 248px; top: 145px; width: 769px; height: 675px; display: flex; flex-direction: column; background: #f0f0f0; border-left: 1px solid #b0b0b0; }
.ptitle { flex: none; height: 31px; padding: 7px 7px 0; background: #fff; color: #a8a8a8; }
.pgrid { flex: none; height: 252px; overflow: hidden; border-top: 1px solid #a8a8a8; border-bottom: 1px solid #a8a8a8; background: #fff; }
table { border-collapse: collapse; table-layout: fixed; width: 768px; }
th { height: 24px; font-weight: normal; border: 1px solid #c4c4c4; border-top: 0; padding: 0; background: linear-gradient(#fcfcfc, #ececec); }
td { height: 19px; padding: 0; border: 1px solid #c4c4c4; line-height: 17px; overflow: hidden; }
tr > :first-child { border-left: 0; }
.n { width: 21px; text-align: center; background: linear-gradient(#fafafa, #ececec); font: 11px/17px "Liberation Mono", monospace; }
.nm { width: 121px; padding-left: 20px; }
th.nm { padding-left: 0; text-align: center; font-size: 12px; }
th.vl { color: #800070; background: linear-gradient(#fbdca6, #efbe62); padding-right: 51px; font-size: 12.500px; }
.val { padding-left: 2px; font-size: 12px; }
.link { color: #0000ff; }
.fold { color: #8c8c8c; padding-left: 2px; }
.plus { display: inline-block; vertical-align: -2px; width: 13px; height: 13px; margin-right: 5px; border: 1px solid #9a9a9a; background: linear-gradient(#111, #111) center / 7px 1px no-repeat, linear-gradient(#111, #111) center / 1px 7px no-repeat, #fff; }
.on .n { background: #fbd39a; color: #800030; }
.on .nm { background: #0a78d8; color: #f4f8ff; }
.on td:last-child { background: #d8e8f7; }
.pfoot { flex: none; height: 26px; display: flex; align-items: center; gap: 10px; padding-left: 5px; }
.cad { flex: 1; display: block; width: 768px; min-height: 0; background: #000; }
.cad .w path, .wx { fill: none; stroke: #fff; stroke-width: 3; }
.cad .w path.dash { stroke-dasharray: 60 12; }
.cad .w path.thick { stroke-width: 6; }
.cad .r path { fill: none; stroke: #f00; stroke-width: 3; }
.cad .y path { fill: none; stroke: #ff0; stroke-width: 3; }
.cad .y path.pt { stroke-width: 6; }
.gt text { fill: #0f0; font: 20px "DejaVu Sans Mono", monospace; }
.gt text { text-anchor: start; }
.gt text[x] { text-anchor: middle; }
.wt { fill: #fff; }
.wt.l { font: 20px "Noto Sans CJK SC", sans-serif; text-anchor: middle; }
.wt.l:first-of-type { text-anchor: start; }
.num text { font: 20px "DejaVu Sans Mono", monospace; text-anchor: middle; fill: #cfe; }
.ct text { fill: #00e6f0; font: 24px "Noto Sans CJK SC", sans-serif; text-anchor: middle; }
.big { fill: #fff; font: 48px "Liberation Sans", sans-serif; text-anchor: middle; }
.ul { stroke: #fff; stroke-width: 6; fill: none; }

/* parametric dialog */
.dlg { position: absolute; left: 786px; top: 171px; width: 500px; height: 584px; display: flex; flex-direction: column; border: 1px solid #1a80d8; background: #f0f0f0; }
.dtitle { flex: none; height: 26px; padding: 5px 3px 0; background: #fff; }
.dgroup { margin: 7px 6px 0 9px; padding: 3px 4px 5px 4px; min-width: 0; border: 1px solid #d8d8d8; height: 507px; flex: none; }
.dgroup legend { padding: 0 0 0 6px; height: 16px; line-height: 16px; margin-left: 1px; }
.thumbs { display: grid; grid-template-columns: repeat(3, 155px); grid-auto-rows: 158px; column-gap: 3px; row-gap: 4px; }
.thumb { margin: 0; padding: 8px 7px 8px 6px; border: 1px solid; border-color: #fff #a0a0a0 #a0a0a0 #fff; }
.thumb.chosen { background: #0ff; }
.pic { width: 140px; height: 140px; background: #008080; }
.pic svg { display: block; width: 140px; height: 120px; overflow: visible; }
figcaption { height: 20px; line-height: 20px; text-align: center; color: #fff; }
.wl { fill: none; stroke: #fff; stroke-width: 1; shape-rendering: crispEdges; }
.rd { fill: none; stroke: #f00; stroke-width: 2; stroke-linejoin: round; }
.dbtns { flex: none; display: flex; justify-content: flex-end; gap: 15px; padding: 10px 6px 0 0; }
.btn { display: block; width: 72px; height: 23px; border: 1px solid #adadad; background: #e1e1e1; text-align: center; line-height: 21px; }
.btn.ok { border: 2px solid #0a78d8; line-height: 19px; }

/* red hand-drawn annotations */
.notes { position: absolute; left: 0; top: 0; width: 1271px; height: 820px; pointer-events: none; }
.notes ellipse { fill: none; stroke: #f05a5a; stroke-width: 1; }
.notes polygon { fill: #f44444; }
```
